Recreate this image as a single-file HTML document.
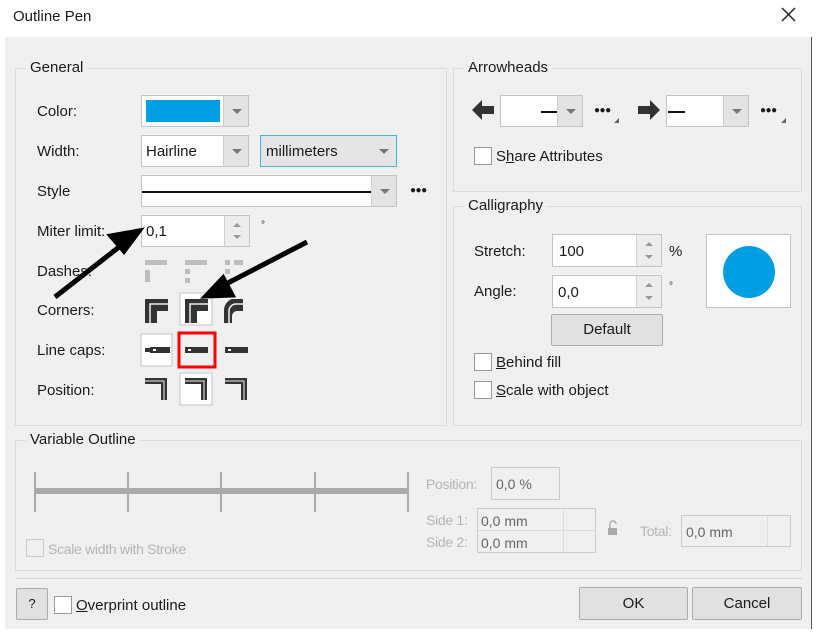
<!DOCTYPE html>
<html><head><meta charset="utf-8"><style>
*{box-sizing:border-box;margin:0;padding:0}
body{width:817px;height:632px;background:#fff;font-family:"Liberation Sans",sans-serif;font-size:15px;color:#1a1a1a;position:relative;overflow:hidden}
.a{position:absolute}
.t{position:absolute;white-space:nowrap;line-height:18px;margin-top:1px}
.grp{position:absolute;border:1px solid #dcdcdc}
.lg{position:absolute;background:#f0f0f0;padding:0 4px;line-height:18px;top:-10px;left:10px}
.box{position:absolute;background:#fff;border:1px solid #c4c4c4}
.dd{position:absolute;right:0;top:0;bottom:0;width:25px;background:#e3e3e3;border-left:1px solid #cfcfcf}
.dd:after{content:"";position:absolute;left:8px;top:13px;border-left:5px solid transparent;border-right:5px solid transparent;border-top:5px solid #777}
.sp{position:absolute;right:0;top:0;bottom:0;width:25px;background:#ededed;border-left:1px solid #cfcfcf}
.sp:before{content:"";position:absolute;left:8px;top:7px;border-left:4px solid transparent;border-right:4px solid transparent;border-bottom:4px solid #999}
.sp:after{content:"";position:absolute;left:8px;bottom:7px;border-left:4px solid transparent;border-right:4px solid transparent;border-top:4px solid #999}
.cb{position:absolute;width:18px;height:18px;background:#fff;border:1px solid #999}
.btn{position:absolute;background:#e1e1e1;border:1px solid #adadad;text-align:center;border-radius:2px}
.dis{color:#b4b4b4;letter-spacing:-0.3px}
.dots{position:absolute;white-space:nowrap;font-size:10px;letter-spacing:-0.5px;line-height:12px}
u{text-decoration:underline}
</style></head><body>
<div class="t" style="left:13px;top:7px">Outline Pen</div>
<svg class="a" style="left:781px;top:7px" width="15" height="15"><path d="M1 1L14 14M14 1L1 14" stroke="#222" stroke-width="1.5"/></svg>
<div class="a" style="left:5px;top:37px;width:807px;height:592px;background:#f0f0f0;border-right:1px solid #555"></div>

<!-- General -->
<div class="grp" style="left:15px;top:68px;width:432px;height:358px"><div class="lg">General</div></div>
<div class="t" style="left:37px;top:102px">Color:</div>
<div class="box" style="left:141px;top:95px;width:108px;height:32px"><div class="a" style="left:4px;top:4px;width:74px;height:22px;background:#009fe3"></div><div class="dd"></div></div>
<div class="t" style="left:37px;top:142px">Width:</div>
<div class="box" style="left:141px;top:135px;width:108px;height:32px"><div class="t" style="left:4px;top:6px">Hairline</div><div class="dd"></div></div>
<div class="box" style="left:260px;top:135px;width:137px;height:32px;background:#e5e5e5;border:1px solid #3ab4ec"><div class="t" style="left:5px;top:6px">millimeters</div><div class="a" style="left:118px;top:13px;border-left:5px solid transparent;border-right:5px solid transparent;border-top:5px solid #777"></div></div>
<div class="t" style="left:37px;top:182px">Style</div>
<div class="box" style="left:141px;top:175px;width:256px;height:32px"><div class="a" style="left:0;top:15px;width:230px;height:2px;background:#111"></div><div class="dd"></div></div>
<div class="dots" style="left:410px;top:185px">●●●</div>
<div class="t" style="left:37px;top:222px">Miter limit:</div>
<div class="box" style="left:141px;top:215px;width:109px;height:32px"><div class="t" style="left:4px;top:6px">0,1</div><div class="sp"></div></div>
<div class="t" style="left:261px;top:216px;font-size:10px">°</div>
<div class="t" style="left:37px;top:262px">Dashes:</div>
<svg class="a" style="left:140px;top:255px" width="115" height="160">
<g fill="#bdbdbd"><rect x="5" y="5" width="22" height="5"/><rect x="5" y="15" width="5" height="12"/><rect x="45" y="5" width="22" height="5"/><rect x="45" y="14" width="5" height="5"/><rect x="45" y="23" width="5" height="5"/><rect x="85" y="5" width="5" height="5"/><rect x="94" y="5" width="9" height="5"/><rect x="85" y="14" width="5" height="5"/></g>
<rect x="40" y="38" width="32" height="32" fill="#fff" stroke="#c4c4c4"/>
<g fill="#333"><path d="M5 44h23v12h-11v12h-12z"/><path d="M45 44h23v12h-11v12h-12z"/><path d="M92 44h11v12h-6a5 5 0 0 0-5 5v7h-8v-12a12 12 0 0 1 8-12z"/></g>
<g stroke="#f0f0f0" stroke-width="1.5" fill="none"><path d="M10 68v-19h18"/><path d="M50 68v-19h18"/><path d="M89 68v-12a7 7 0 0 1 7-7h7"/></g>
<rect x="1" y="79" width="31" height="32" fill="#fff" stroke="#c4c4c4"/>
<rect x="39" y="78" width="36" height="34" fill="none" stroke="#f00" stroke-width="3"/>
<g fill="#333"><path d="M10 92h20v6h-20z"/><rect x="5" y="93" width="6" height="4"/><rect x="45" y="92" width="23" height="6"/><rect x="85" y="92" width="23" height="6"/></g>
<g fill="#fff"><rect x="13" y="94" width="3" height="2"/><rect x="48" y="94" width="3" height="2"/><rect x="88" y="94" width="3" height="2"/></g>
<rect x="40" y="118" width="32" height="32" fill="#fff" stroke="#c4c4c4"/>
<g fill="#333"><path d="M5 123h22v22h-6v-16h-16z"/><path d="M45 123h22v22h-6v-16h-16z"/><path d="M85 123h22v22h-6v-16h-16z"/></g>
<g stroke="#f0f0f0" stroke-width="1" fill="none"><path d="M5 126h19v19"/><path d="M45 126h19v19"/><path d="M85 126h19v19"/></g>
</svg>
<div class="t" style="left:37px;top:301px">Corners:</div>
<div class="t" style="left:37px;top:341px">Line caps:</div>
<div class="t" style="left:37px;top:381px">Position:</div>
<svg class="a" style="left:0;top:0" width="450" height="420"><g stroke="#000" stroke-width="5" fill="#000"><line x1="55" y1="297" x2="128" y2="240"/><path d="M139 231l-28 5 13 15z"/><line x1="307" y1="242" x2="222" y2="286"/><path d="M206 296l26-1-9-17z"/></g></svg>

<!-- Arrowheads -->
<div class="grp" style="left:453px;top:68px;width:349px;height:124px"><div class="lg">Arrowheads</div></div>
<svg class="a" style="left:472px;top:99px" width="24" height="22"><path d="M0 11l10-10v6h12v8h-12v6z" fill="#333"/></svg>
<div class="box" style="left:500px;top:95px;width:83px;height:32px"><div class="a" style="left:40px;top:15px;width:17px;height:2px;background:#111"></div><div class="dd"></div></div>
<div class="dots" style="left:594px;top:105px">●●●</div><div class="a" style="left:614px;top:118px;border-left:5px solid transparent;border-bottom:5px solid #666"></div>
<svg class="a" style="left:638px;top:99px" width="24" height="22"><path d="M22 11l-10-10v6h-12v8h12v6z" fill="#333"/></svg>
<div class="box" style="left:666px;top:95px;width:83px;height:32px"><div class="a" style="left:1px;top:15px;width:17px;height:2px;background:#111"></div><div class="dd"></div></div>
<div class="dots" style="left:760px;top:105px">●●●</div><div class="a" style="left:781px;top:118px;border-left:5px solid transparent;border-bottom:5px solid #666"></div>
<div class="cb" style="left:474px;top:147px"></div><div class="t" style="left:496px;top:147px">S<u>h</u>are Attributes</div>

<!-- Calligraphy -->
<div class="grp" style="left:453px;top:206px;width:349px;height:220px"><div class="lg">Calligraphy</div></div>
<div class="t" style="left:474px;top:242px">Stretch:</div>
<div class="box" style="left:552px;top:234px;width:110px;height:33px"><div class="t" style="left:6px;top:7px">100</div><div class="sp"></div></div>
<div class="t" style="left:669px;top:242px">%</div>
<div class="t" style="left:474px;top:282px">Angle:</div>
<div class="box" style="left:552px;top:275px;width:110px;height:33px"><div class="t" style="left:5px;top:7px">0,0</div><div class="sp"></div></div>
<div class="t" style="left:669px;top:277px;font-size:10px">°</div>
<div class="box" style="left:706px;top:234px;width:85px;height:74px"><div class="a" style="left:16px;top:11px;width:52px;height:52px;border-radius:50%;background:#009fe3"></div></div>
<div class="btn" style="left:551px;top:314px;width:112px;height:32px;line-height:30px">Default</div>
<div class="cb" style="left:474px;top:353px"></div><div class="t" style="left:496px;top:353px"><u>B</u>ehind fill</div>
<div class="cb" style="left:474px;top:381px"></div><div class="t" style="left:496px;top:381px"><u>S</u>cale with object</div>

<!-- Variable Outline -->
<div class="grp" style="left:15px;top:440px;width:787px;height:131px"><div class="lg">Variable Outline</div></div>
<div class="a" style="left:34px;top:488px;width:375px;height:6px;background:#aaa"></div>
<div class="a" style="left:34px;top:472px;width:2px;height:40px;background:#aaa"></div>
<div class="a" style="left:127px;top:472px;width:2px;height:40px;background:#aaa"></div>
<div class="a" style="left:220px;top:472px;width:2px;height:40px;background:#aaa"></div>
<div class="a" style="left:314px;top:472px;width:2px;height:40px;background:#aaa"></div>
<div class="a" style="left:407px;top:472px;width:2px;height:40px;background:#aaa"></div>
<div class="t dis" style="left:426px;top:474px;font-size:14px">Position:</div>
<div class="a" style="left:491px;top:467px;width:69px;height:33px;border:1px solid #ccc"><div class="t" style="left:4px;top:6px;font-size:14px;color:#666">0,0 %</div></div>
<div class="t dis" style="left:426px;top:510px;font-size:14px">Side 1:</div>
<div class="t dis" style="left:426px;top:532px;font-size:14px">Side 2:</div>
<div class="a" style="left:477px;top:508px;width:119px;height:45px;border:1px solid #ccc"><div class="t" style="left:3px;top:2px;font-size:14px;color:#666">0,0 mm</div><div class="t" style="left:3px;top:24px;font-size:14px;color:#666">0,0 mm</div><div class="a" style="left:0;top:21px;width:117px;height:1px;background:#ddd"></div><div class="a" style="left:85px;top:0;width:1px;height:43px;background:#ddd"></div></div>
<svg class="a" style="left:606px;top:519px" width="14" height="18"><path d="M4 9V5a3 3 0 0 1 6 0" stroke="#aaa" stroke-width="1.5" fill="none"/><rect x="2" y="9" width="9" height="7" fill="#aaa"/></svg>
<div class="t dis" style="left:640px;top:521px;font-size:14px">Total:</div>
<div class="a" style="left:681px;top:515px;width:110px;height:32px;border:1px solid #ccc"><div class="t" style="left:4px;top:6px;font-size:14px;color:#666">0,0 mm</div><div class="a" style="left:85px;top:0;width:1px;height:30px;background:#ddd"></div></div>
<div class="a" style="left:26px;top:539px;width:18px;height:18px;border:1px solid #ccc"></div>
<div class="t dis" style="left:48px;top:539px;font-size:14px">Scale width with Stroke</div>

<div class="a" style="left:15px;top:578px;width:787px;height:1px;background:#d6d6d6"></div>
<div class="btn" style="left:16px;top:588px;width:32px;height:32px;line-height:30px;font-size:13px">?</div>
<div class="cb" style="left:54px;top:596px"></div><div class="t" style="left:76px;top:596px"><u>O</u>verprint outline</div>
<div class="btn" style="left:579px;top:587px;width:109px;height:33px;line-height:31px">OK</div>
<div class="btn" style="left:692px;top:587px;width:110px;height:33px;line-height:31px">Cancel</div>
</body></html>
